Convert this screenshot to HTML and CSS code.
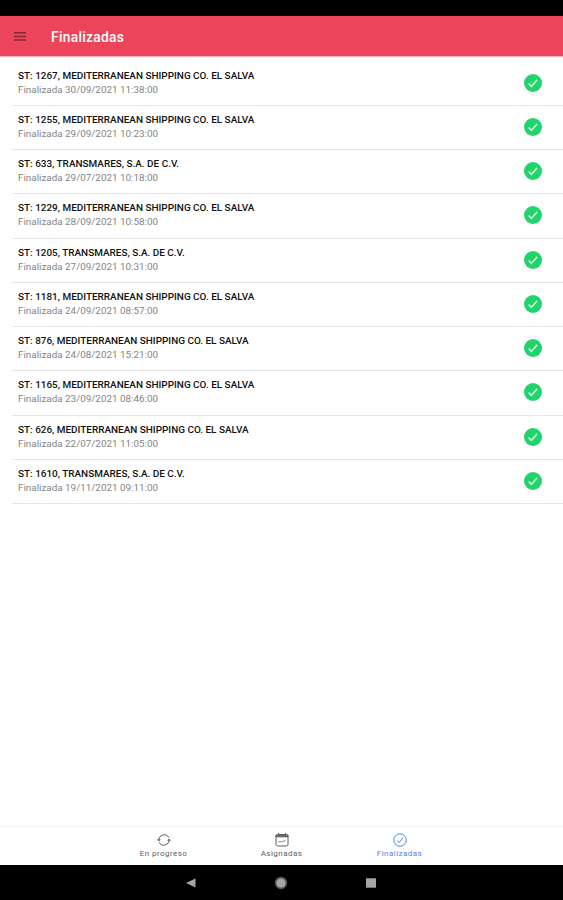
FILE: index.html
```
<!DOCTYPE html>
<html lang="es">
<head>
    <meta charset="UTF-8">
    <meta name="viewport" content="width=device-width, initial-scale=1.0">
    <title>Finalizadas</title>
    <link rel="stylesheet" href="styles.css">
</head>
<body>
    <svg width="0" height="0" class="symbols">
        <symbol id="check" viewBox="0 0 18 18">
            <circle cx="9" cy="9" r="9" fill="#20d36b"/>
            <path d="M4.7 9.6 7.4 12.4 13.2 5.7" fill="none" stroke="#d5f9e0" stroke-width="1.6"/>
        </symbol>
    </svg>
    <div class="status-bar"></div>
    <header class="toolbar">
        <svg class="menu-icon" viewBox="0 0 12 9">
            <path d="M0 .8H12M0 4.4H12M0 8H12" stroke="#85283a" stroke-width="1.5"/>
        </svg>
        <h1>Finalizadas</h1>
    </header>
    <main class="list">
        <div class="item">
            <div class="label"><h2>ST: 1267, MEDITERRANEAN SHIPPING CO. EL SALVA</h2><p>Finalizada 30/09/2021 11:38:00</p></div>
            <svg class="check"><use href="#check"/></svg>
        </div>
        <div class="item">
            <div class="label"><h2>ST: 1255, MEDITERRANEAN SHIPPING CO. EL SALVA</h2><p>Finalizada 29/09/2021 10:23:00</p></div>
            <svg class="check"><use href="#check"/></svg>
        </div>
        <div class="item">
            <div class="label"><h2>ST: 633, TRANSMARES, S.A. DE C.V.</h2><p>Finalizada 29/07/2021 10:18:00</p></div>
            <svg class="check"><use href="#check"/></svg>
        </div>
        <div class="item">
            <div class="label"><h2>ST: 1229, MEDITERRANEAN SHIPPING CO. EL SALVA</h2><p>Finalizada 28/09/2021 10:58:00</p></div>
            <svg class="check"><use href="#check"/></svg>
        </div>
        <div class="item">
            <div class="label"><h2>ST: 1205, TRANSMARES, S.A. DE C.V.</h2><p>Finalizada 27/09/2021 10:31:00</p></div>
            <svg class="check"><use href="#check"/></svg>
        </div>
        <div class="item">
            <div class="label"><h2>ST: 1181, MEDITERRANEAN SHIPPING CO. EL SALVA</h2><p>Finalizada 24/09/2021 08:57:00</p></div>
            <svg class="check"><use href="#check"/></svg>
        </div>
        <div class="item">
            <div class="label"><h2>ST: 876, MEDITERRANEAN SHIPPING CO. EL SALVA</h2><p>Finalizada 24/08/2021 15:21:00</p></div>
            <svg class="check"><use href="#check"/></svg>
        </div>
        <div class="item">
            <div class="label"><h2>ST: 1165, MEDITERRANEAN SHIPPING CO. EL SALVA</h2><p>Finalizada 23/09/2021 08:46:00</p></div>
            <svg class="check"><use href="#check"/></svg>
        </div>
        <div class="item">
            <div class="label"><h2>ST: 626, MEDITERRANEAN SHIPPING CO. EL SALVA</h2><p>Finalizada 22/07/2021 11:05:00</p></div>
            <svg class="check"><use href="#check"/></svg>
        </div>
        <div class="item">
            <div class="label"><h2>ST: 1610, TRANSMARES, S.A. DE C.V.</h2><p>Finalizada 19/11/2021 09:11:00</p></div>
            <svg class="check"><use href="#check"/></svg>
        </div>
    </main>
    <nav class="tabs">
        <a class="tab">
            <svg viewBox="0 0 14 14" fill="none" stroke="currentColor">
                <path d="M1.8 6.5A5.4 5.4 0 0 1 12 4.8M12.2 7.5A5.4 5.4 0 0 1 2 9.2"/>
                <path d="M0 6.2H3.8L1.9 8.5ZM10.2 7.8H14L12.1 5.5Z" fill="currentColor" stroke="none"/>
            </svg>
            <span>En progreso</span>
        </a>
        <a class="tab">
            <svg viewBox="0 0 14 14" fill="none" stroke="currentColor">
                <rect x="1" y="1.5" width="12" height="11.5" rx="1.5"/>
                <path d="M1 2.2H13V3.8H1Z" fill="currentColor"/>
                <path d="M3.5 0V2M10.5 0V2"/>
                <path d="M3.5 8.7H7.5L10.5 7.2" stroke-width=".8"/>
            </svg>
            <span>Asignadas</span>
        </a>
        <a class="tab active">
            <svg viewBox="0 0 14 14" fill="none" stroke="currentColor">
                <circle cx="7" cy="7" r="6.2"/>
                <path d="M4.2 7.5 6.2 9.5 10 4.7"/>
            </svg>
            <span>Finalizadas</span>
        </a>
    </nav>
    <footer class="nav-bar">
        <svg viewBox="0 0 10 10"><path d="M0 5 9.5.5V9.5Z"/></svg>
        <svg class="home" viewBox="0 0 14 14"><circle cx="7" cy="7" r="6.2" fill="#555"/><circle cx="7" cy="7" r="4.6"/></svg>
        <svg viewBox="0 0 10 10"><path d="M0 .3H10V9.7H0Z"/></svg>
    </footer>
</body>
</html>
```
FILE: styles.css
```
* {
    box-sizing: border-box;
}
body {
    margin: 0;
    height: 900px;
    display: flex;
    flex-direction: column;
    overflow: hidden;
    background-color: #fff;
    font-family: Roboto, "Liberation Sans", sans-serif;
}
h1, h2, p {
    margin: 0;
    white-space: nowrap;
}
.symbols {
    position: absolute;
}
.status-bar {
    height: 16px;
    background-color: #000;
}
.toolbar {
    height: 40px;
    padding-left: 14px;
    display: flex;
    align-items: center;
    background-color: #ec455b;
    box-shadow: 0 1px 1px #f5b5be;
}
.menu-icon {
    width: 12px;
    height: 9px;
    margin-right: 25px;
}
h1 {
    color: #fff;
    font-size: 13.8px;
    font-weight: 500;
    letter-spacing: 0.3px;
    padding-top: 1px;
}
.list {
    flex: 1;
    padding: 5.5px 0 0 12px;
}
.item {
    height: 44.25px;
    padding: 0 21px 1px 6px;
    display: flex;
    align-items: center;
    justify-content: space-between;
    border-bottom: 1px solid #e6e6e6;
}
h2 {
    color: #111;
    font-size: 9.95px;
    font-weight: 500;
    line-height: 14px;
}
p {
    color: #858585;
    font-size: 9.87px;
    line-height: 14px;
}
.check {
    width: 18px;
    height: 18px;
}
.tabs {
    height: 39px;
    display: flex;
    justify-content: center;
    border-top: 1px solid #f4f4f4;
}
.tab {
    width: 118px;
    padding-top: 6px;
    display: flex;
    flex-direction: column;
    align-items: center;
    color: #606060;
    font-size: 8px;
    letter-spacing: 0.45px;
    line-height: 14px;
}
.tab svg {
    width: 14px;
    height: 14px;
}
.tab.active {
    color: #4c82f5;
}
.nav-bar {
    height: 35px;
    padding-right: 1px;
    display: flex;
    align-items: center;
    justify-content: center;
    gap: 78px;
    background-color: #000;
    fill: #a5a5a5;
}
.nav-bar svg {
    width: 10px;
    height: 10px;
}
.nav-bar .home {
    width: 14px;
    height: 14px;
}
```
